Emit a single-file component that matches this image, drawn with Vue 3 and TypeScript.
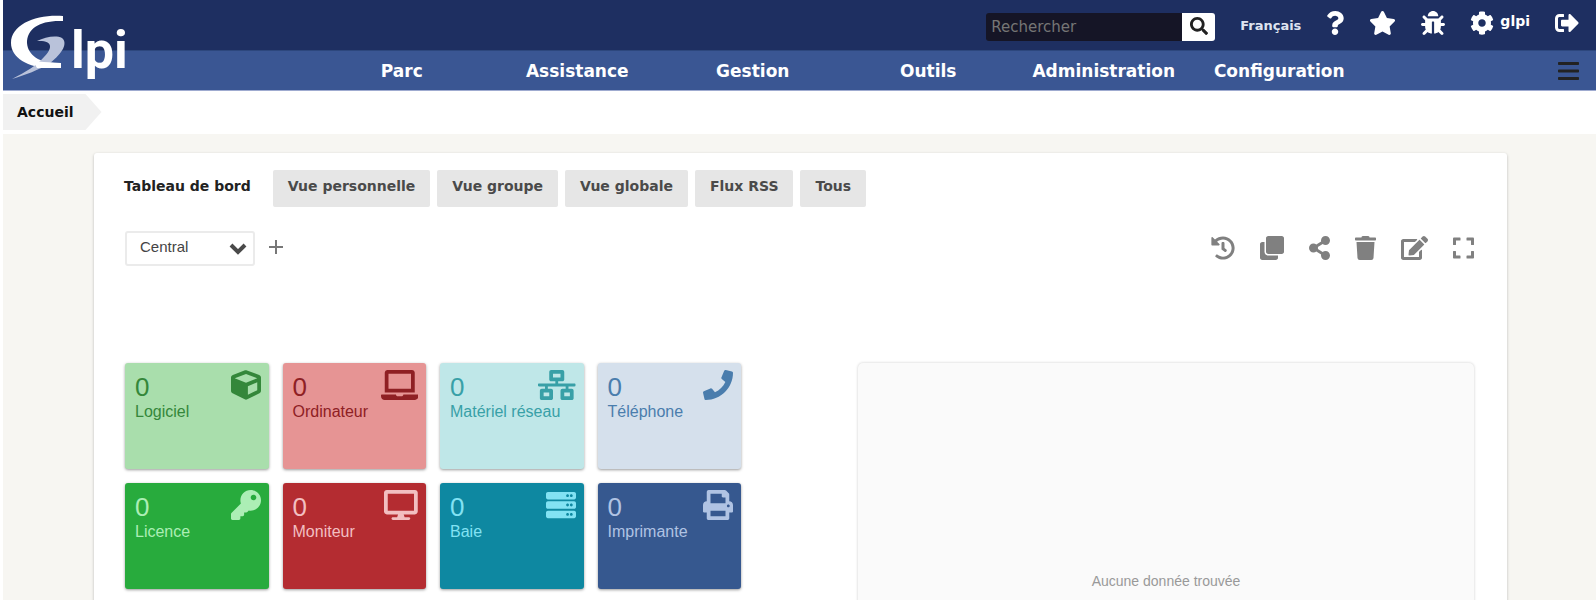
<script setup lang="ts">
import { ref } from 'vue'

interface Icon {
  w: number
  d: string
}

interface Tile {
  label: string
  icon: string
  tone: string
}

const rack = (y: number): string =>
  `M480 ${y + 128}H32c-17.7 0-32-14.3-32-32V${y + 32}C0 ${y + 14.3} 14.3 ${y} 32 ${y}h448c17.7 0 32 14.3 32 32v64c0 17.7-14.3 32-32 32z` +
  `m-48-88c-13.3 0-24 10.7-24 24s10.7 24 24 24 24-10.7 24-24-10.7-24-24-24z` +
  `m-64 0c-13.3 0-24 10.7-24 24s10.7 24 24 24 24-10.7 24-24-10.7-24-24-24z`

const bar = (y: number): string =>
  `M16 ${y + 60}h416c8.8 0 16-7.2 16-16V${y + 16}c0-8.8-7.2-16-16-16H16C7.2 ${y} 0 ${y + 7.2} 0 ${y + 16}v28c0 8.8 7.2 16 16 16z`

const icons: Record<string, Icon> = {
  search: { w: 512, d: 'M505 442.7L405.3 343c-4.5-4.5-10.6-7-17-7H372c27.6-35.3 44-79.7 44-128C416 93.1 322.9 0 208 0S0 93.1 0 208s93.1 208 208 208c48.3 0 92.7-16.4 128-44v16.3c0 6.4 2.5 12.5 7 17l99.7 99.7c9.4 9.4 24.6 9.4 33.9 0l28.3-28.3c9.4-9.4 9.4-24.6.1-34zM208 336c-70.7 0-128-57.2-128-128 0-70.7 57.2-128 128-128 70.7 0 128 57.2 128 128 0 70.7-57.2 128-128 128z' },
  question: { w: 384, d: 'M202.021 0C122.202 0 70.503 32.703 29.914 91.026c-7.363 10.58-5.093 25.086 5.178 32.874l43.138 32.709c10.373 7.865 25.132 6.026 33.253-4.148 25.049-31.381 43.63-49.449 82.757-49.449 30.764 0 68.816 19.799 68.816 49.631 0 22.552-18.617 34.134-48.993 51.164-35.423 19.86-82.299 44.576-82.299 106.405V320c0 13.255 10.745 24 24 24h72.471c13.255 0 24-10.745 24-24v-5.773c0-42.86 125.268-44.645 125.268-160.627C377.504 66.256 286.902 0 202.021 0zM192 373.459c-38.196 0-69.271 31.075-69.271 69.271 0 38.195 31.075 69.27 69.271 69.27s69.271-31.075 69.271-69.271-31.075-69.27-69.271-69.27z' },
  star: { w: 576, d: 'M259.3 17.8L194 150.2 47.9 171.5c-26.2 3.8-36.7 36.1-17.7 54.6l105.7 103-25 145.5c-4.5 26.3 23.2 46 46.4 33.7L288 439.6l130.7 68.7c23.2 12.2 50.9-7.4 46.4-33.7l-25-145.5 105.7-103c19-18.5 8.5-50.8-17.7-54.6L382 150.2 316.7 17.8c-11.7-23.6-45.6-23.9-57.4 0z' },
  bug: { w: 512, d: 'M511.988 288.9c-.478 17.43-15.217 31.1-32.653 31.1H424v16c0 21.864-4.882 42.584-13.6 61.145l60.228 60.228c12.496 12.497 12.496 32.758 0 45.255-12.498 12.497-32.759 12.496-45.256 0l-54.736-54.736C345.886 467.965 314.351 480 280 480V236c0-6.627-5.373-12-12-12h-24c-6.627 0-12 5.373-12 12v244c-34.351 0-65.886-12.035-90.636-32.108l-54.736 54.736c-12.498 12.497-32.759 12.496-45.256 0-12.496-12.497-12.496-32.758 0-45.255l60.228-60.228C92.882 378.584 88 357.864 88 336v-16H32.666C15.23 320 .491 306.33.013 288.9-.484 270.816 14.028 256 32 256h56v-58.745l-46.628-46.628c-12.496-12.497-12.496-32.758 0-45.255 12.498-12.497 32.758-12.497 45.256 0L141.255 160h229.489l54.627-54.627c12.498-12.497 32.758-12.497 45.256 0 12.496 12.497 12.496 32.758 0 45.255L424 197.255V256h56c17.972 0 32.484 14.816 31.988 32.9zM257 0c-61.856 0-112 50.144-112 112h224C369 50.144 318.856 0 257 0z' },
  cog: { w: 512, d: 'M487.4 315.7l-42.6-24.6c4.3-23.2 4.3-47 0-70.2l42.6-24.6c4.9-2.8 7.1-8.6 5.5-14-11.1-35.6-30-67.8-54.7-94.6-3.8-4.1-10-5.1-14.8-2.3L380.8 110c-17.9-15.4-38.5-27.3-60.8-35.1V25.8c0-5.6-3.9-10.5-9.4-11.7-36.7-8.2-74.3-7.8-109.2 0-5.5 1.2-9.4 6.1-9.4 11.7V75c-22.2 7.9-42.8 19.8-60.8 35.1L88.7 85.5c-4.9-2.8-11-1.9-14.8 2.3-24.7 26.7-43.6 58.9-54.7 94.6-1.7 5.4.6 11.2 5.5 14L67.3 221c-4.3 23.2-4.3 47 0 70.2l-42.6 24.6c-4.9 2.8-7.1 8.6-5.5 14 11.1 35.6 30 67.8 54.7 94.6 3.8 4.1 10 5.1 14.8 2.3l42.6-24.6c17.9 15.4 38.5 27.3 60.8 35.1v49.2c0 5.6 3.9 10.5 9.4 11.7 36.7 8.2 74.3 7.8 109.2 0 5.5-1.2 9.4-6.1 9.4-11.7v-49.2c22.2-7.9 42.8-19.8 60.8-35.1l42.6 24.6c4.9 2.8 11 1.9 14.8-2.3 24.7-26.7 43.6-58.9 54.7-94.6 1.5-5.5-.7-11.3-5.6-14.1zM256 336c-44.1 0-80-35.9-80-80s35.9-80 80-80 80 35.9 80 80-35.9 80-80 80z' },
  logout: { w: 512, d: 'M497 273L329 441c-15 15-41 4.5-41-17v-96H152c-13.3 0-24-10.7-24-24v-96c0-13.3 10.7-24 24-24h136V88c0-21.4 25.9-32 41-17l168 168c9.3 9.4 9.3 24.6 0 34zM192 436v-40c0-6.6-5.4-12-12-12H96c-17.7 0-32-14.3-32-32V160c0-17.7 14.3-32 32-32h84c6.6 0 12-5.4 12-12V76c0-6.6-5.4-12-12-12H96c-53 0-96 43-96 96v192c0 53 43 96 96 96h84c6.6 0 12-5.4 12-12z' },
  bars: { w: 448, d: bar(66) + bar(226) + bar(386) },
  history: { w: 512, d: 'M504 255.531c.253 136.64-111.18 248.372-247.82 248.468-59.015.042-113.223-20.53-155.822-54.911-11.077-8.94-11.905-25.541-1.839-35.607l11.267-11.267c8.609-8.609 22.353-9.551 31.891-1.984C173.062 425.135 212.781 440 256 440c101.705 0 184-82.311 184-184 0-101.705-82.311-184-184-184-48.814 0-93.149 18.969-126.068 49.932l50.754 50.754c10.08 10.08 2.941 27.314-11.313 27.314H24c-8.837 0-16-7.163-16-16V38.627c0-14.254 17.234-21.393 27.314-11.314l49.372 49.372C129.209 34.136 189.552 8 256 8c136.81 0 247.747 110.78 248 247.531zm-180.912 78.784l9.823-12.63c8.138-10.463 6.253-25.542-4.21-33.679L288 256.349V152c0-13.255-10.745-24-24-24h-16c-13.255 0-24 10.745-24 24v135.651l65.409 50.874c10.463 8.137 25.541 6.253 33.679-4.21z' },
  clone: { w: 512, d: 'M464 0c26.51 0 48 21.49 48 48v288c0 26.51-21.49 48-48 48H176c-26.51 0-48-21.49-48-48V48c0-26.51 21.49-48 48-48h288M176 416c-44.112 0-80-35.888-80-80V128H48c-26.51 0-48 21.49-48 48v288c0 26.51 21.49 48 48 48h288c26.51 0 48-21.49 48-48v-48H176z' },
  share: { w: 448, d: 'M352 320c-22.608 0-43.387 7.819-59.79 20.895l-102.486-64.054a96.551 96.551 0 0 0 0-41.683l102.486-64.054C308.613 184.181 329.392 192 352 192c53.019 0 96-42.981 96-96S405.019 0 352 0s-96 42.981-96 96c0 7.158.79 14.13 2.276 20.841L155.79 180.895C139.387 167.819 118.608 160 96 160c-53.019 0-96 42.981-96 96s42.981 96 96 96c22.608 0 43.387-7.819 59.79-20.895l102.486 64.054A96.301 96.301 0 0 0 256 416c0 53.019 42.981 96 96 96s96-42.981 96-96-42.981-96-96-96z' },
  trash: { w: 448, d: 'M432 32H312l-9.4-18.7A24 24 0 0 0 281.1 0H166.8a23.72 23.72 0 0 0-21.4 13.3L136 32H16A16 16 0 0 0 0 48v32a16 16 0 0 0 16 16h416a16 16 0 0 0 16-16V48a16 16 0 0 0-16-16zM53.2 467a48 48 0 0 0 47.9 45h245.8a48 48 0 0 0 47.9-45L416 128H32z' },
  edit: { w: 576, d: 'M402.6 83.2l90.2 90.2c3.8 3.8 3.8 10 0 13.8L274.4 405.6l-92.8 10.3c-12.4 1.4-22.9-9.1-21.5-21.5l10.3-92.8L388.8 83.2c3.8-3.8 10-3.8 13.8 0zm162-22.9l-48.8-48.8c-15.2-15.2-39.9-15.2-55.2 0l-35.4 35.4c-3.8 3.8-3.8 10 0 13.8l90.2 90.2c3.8 3.8 10 3.8 13.8 0l35.4-35.4c15.2-15.3 15.2-40 0-55.2zM384 346.2V448H64V128h229.8c3.2 0 6.2-1.3 8.5-3.5l40-40c7.6-7.6 2.2-20.5-8.5-20.5H48C21.5 64 0 85.5 0 112v352c0 26.5 21.5 48 48 48h352c26.5 0 48-21.5 48-48V306.2c0-10.7-12.9-16-20.5-8.5l-40 40c-2.2 2.3-3.5 5.3-3.5 8.5z' },
  expand: { w: 448, d: 'M0 180V56c0-13.3 10.7-24 24-24h124c6.6 0 12 5.4 12 12v40c0 6.6-5.4 12-12 12H64v84c0 6.6-5.4 12-12 12H12c-6.6 0-12-5.4-12-12zM288 44v40c0 6.6 5.4 12 12 12h84v84c0 6.6 5.4 12 12 12h40c6.6 0 12-5.4 12-12V56c0-13.3-10.7-24-24-24H300c-6.6 0-12 5.4-12 12zm148 276h-40c-6.6 0-12 5.4-12 12v84h-84c-6.6 0-12 5.4-12 12v40c0 6.6 5.4 12 12 12h124c13.3 0 24-10.7 24-24V332c0-6.6-5.4-12-12-12zM160 468v-40c0-6.6-5.4-12-12-12H64v-84c0-6.6-5.4-12-12-12H12c-6.6 0-12 5.4-12 12v124c0 13.3 10.7 24 24 24h124c6.6 0 12-5.4 12-12z' },
  cube: { w: 512, d: 'M239.1 6.3l-208 78c-18.7 7-31.1 25-31.1 45v225.1c0 18.2 10.3 34.8 26.5 42.9l208 104c13.5 6.8 29.4 6.8 42.9 0l208-104c16.3-8.1 26.5-24.8 26.5-42.9V129.3c0-20-12.4-37.9-31.1-44.9l-208-78C262 2.2 250 2.2 239.1 6.3zM256 68.4l192 72v1.1l-192 78-192-78v-1.1l192-72zm32 356V275.5l160-65v133.9l-160 80z' },
  laptop: { w: 640, d: 'M624 416H381.54c-.74 19.81-14.71 32-32.74 32H288c-18.69 0-33.02-17.47-32.77-32H16c-8.8 0-16 7.2-16 16v16c0 35.2 28.8 64 64 64h512c35.2 0 64-28.8 64-64v-16c0-8.8-7.2-16-16-16zM576 48c0-26.4-21.6-48-48-48H112C85.6 0 64 21.6 64 48v336h512V48zm-64 272H128V64h384v256z' },
  network: { w: 640, d: 'M640 264v-16c0-8.84-7.16-16-16-16H344v-40h72c17.67 0 32-14.33 32-32V32c0-17.67-14.33-32-32-32H224c-17.67 0-32 14.33-32 32v128c0 17.67 14.33 32 32 32h72v40H16c-8.84 0-16 7.16-16 16v16c0 8.84 7.16 16 16 16h104v40H64c-17.67 0-32 14.33-32 32v128c0 17.67 14.33 32 32 32h160c17.67 0 32-14.33 32-32V352c0-17.67-14.33-32-32-32h-56v-40h304v40h-56c-17.67 0-32 14.33-32 32v128c0 17.67 14.33 32 32 32h160c17.67 0 32-14.33 32-32V352c0-17.67-14.33-32-32-32h-56v-40h104c8.84 0 16-7.16 16-16zM256 128V64h128v64H256zm-64 320H96v-64h96v64zm352 0h-96v-64h96v64z' },
  phone: { w: 512, d: 'M493.4 24.6l-104-24c-11.3-2.6-22.9 3.3-27.5 13.9l-48 112c-4.2 9.8-1.4 21.3 6.9 28l60.6 49.6c-36 76.7-98.9 140.5-177.2 177.2l-49.6-60.6c-6.8-8.3-18.2-11.1-28-6.9l-112 48C3.9 366.5-2 378.1.6 389.4l24 104C27.1 504.2 36.7 512 48 512c256.1 0 464-207.5 464-464 0-11.2-7.7-20.9-18.6-23.4z' },
  key: { w: 512, d: 'M512 176.001C512 273.203 433.202 352 336 352c-11.22 0-22.19-1.062-32.827-3.069l-24.012 27.014A23.999 23.999 0 0 1 261.223 384H224v40c0 13.255-10.745 24-24 24h-40v40c0 13.255-10.745 24-24 24H24c-13.255 0-24-10.745-24-24v-78.059c0-6.365 2.529-12.47 7.029-16.971l161.802-161.802C163.108 213.814 160 195.271 160 176 160 78.798 238.797.001 335.999 0 433.488-.001 512 78.511 512 176.001zM336 128c0 26.51 21.49 48 48 48s48-21.49 48-48-21.49-48-48-48-48 21.49-48 48z' },
  desktop: { w: 576, d: 'M528 0H48C21.5 0 0 21.5 0 48v320c0 26.5 21.5 48 48 48h192l-16 48h-72c-13.3 0-24 10.7-24 24s10.7 24 24 24h272c13.3 0 24-10.7 24-24s-10.7-24-24-24h-72l-16-48h192c26.5 0 48-21.5 48-48V48c0-26.5-21.5-48-48-48zm-16 352H64V64h448v288z' },
  server: { w: 512, d: rack(32) + rack(192) + rack(352) },
  print: { w: 512, d: 'M448 192V77.25c0-8.49-3.37-16.62-9.37-22.63L393.37 9.37c-6-6-14.14-9.37-22.63-9.37H96C78.33 0 64 14.33 64 32v160c-35.35 0-64 28.65-64 64v112c0 8.84 7.16 16 16 16h48v96c0 17.67 14.33 32 32 32h320c17.67 0 32-14.33 32-32v-96h48c8.84 0 16-7.16 16-16V256c0-35.35-28.65-64-64-64zm-64 256H128v-96h256v96zm0-224H128V64h192v48c0 8.84 7.16 16 16 16h48v96zm48 72c-13.25 0-24-10.75-24-24 0-13.26 10.75-24 24-24s24 10.74 24 24c0 13.25-10.75 24-24 24z' },
}

const box = (name: string): string => `0 0 ${icons[name].w} 512`

const menu = ['Parc', 'Assistance', 'Gestion', 'Outils', 'Administration', 'Configuration']
const tabs = ['Tableau de bord', 'Vue personnelle', 'Vue groupe', 'Vue globale', 'Flux RSS', 'Tous']
const activeTab = ref(0)
const search = ref('')
const dashboard = ref('Central')

const shortcuts = [
  { icon: 'question', label: 'Aide' },
  { icon: 'star', label: 'Marque-pages' },
  { icon: 'bug', label: 'Mode debug' },
]

const tools = [
  { icon: 'history', label: 'Historique' },
  { icon: 'clone', label: 'Cloner' },
  { icon: 'share', label: 'Partager' },
  { icon: 'trash', label: 'Supprimer' },
  { icon: 'edit', label: 'Modifier' },
  { icon: 'expand', label: 'Plein écran' },
]

const tiles: Tile[] = [
  { label: 'Logiciel', icon: 'cube', tone: 'software' },
  { label: 'Ordinateur', icon: 'laptop', tone: 'computer' },
  { label: 'Matériel réseau', icon: 'network', tone: 'network' },
  { label: 'Téléphone', icon: 'phone', tone: 'phone' },
  { label: 'Licence', icon: 'key', tone: 'licence' },
  { label: 'Moniteur', icon: 'desktop', tone: 'monitor' },
  { label: 'Baie', icon: 'server', tone: 'rack' },
  { label: 'Imprimante', icon: 'print', tone: 'printer' },
]
</script>

<template>
  <div class="page">
    <header class="header">
      <a class="logo" href="#" aria-label="Glpi">
        <svg viewBox="0 0 130 90" width="130" height="90">
          <path fill="#fff" d="M60 16C34 14 8 24 8 43C8 58 26 69 52 68H58V63C38 64 25 56 24 43C24 29 36 20 60 21Z" />
          <path fill="#b9c2da" d="M34 41C42 37 53 35 59 38C65 43 60 53 47 63C36 70 22 75 9 79C23 72 34 65 41 57C50 48 50 40 34 41Z" />
          <path fill="#fff" d="M30 61L41 62L58 63V68L34 68Z" />
          <text x="68" y="68" class="logo-text">lpi</text>
        </svg>
      </a>
      <div class="topbar">
        <form class="search" @submit.prevent>
          <input v-model="search" type="text" placeholder="Rechercher" aria-label="Rechercher" />
          <button type="submit" aria-label="Lancer la recherche">
            <svg class="i18" :viewBox="box('search')"><path :d="icons.search.d" /></svg>
          </button>
        </form>
        <a href="#" class="lang">Français</a>
        <a v-for="s in shortcuts" :key="s.icon" href="#" :aria-label="s.label">
          <svg class="i24" :viewBox="box(s.icon)"><path :d="icons[s.icon].d" /></svg>
        </a>
        <a href="#" class="user">
          <svg class="i24" :viewBox="box('cog')"><path :d="icons.cog.d" /></svg>
          <span>glpi</span>
        </a>
        <a href="#" aria-label="Déconnexion">
          <svg class="i24" :viewBox="box('logout')"><path :d="icons.logout.d" /></svg>
        </a>
      </div>
      <nav class="nav">
        <ul>
          <li v-for="m in menu" :key="m"><a href="#">{{ m }}</a></li>
        </ul>
        <button type="button" class="burger" aria-label="Menu">
          <svg class="i24" :viewBox="box('bars')"><path :d="icons.bars.d" /></svg>
        </button>
      </nav>
    </header>

    <div class="crumbs"><a href="#">Accueil</a></div>

    <main class="main">
      <section class="card">
        <div class="tabs" role="tablist">
          <button
            v-for="(t, i) in tabs"
            :key="t"
            type="button"
            role="tab"
            :aria-selected="i === activeTab"
            :class="{ active: i === activeTab }"
            @click="activeTab = i"
          >{{ t }}</button>
        </div>

        <div class="toolbar">
          <div class="picker">
            <select v-model="dashboard" aria-label="Tableau de bord">
              <option>Central</option>
            </select>
            <svg viewBox="0 0 18 12" width="18" height="12"><path d="M2 2L9 9L16 2" /></svg>
          </div>
          <button type="button" class="add" aria-label="Ajouter">
            <svg viewBox="0 0 14 14" width="14" height="14"><path d="M7 0V14M0 7H14" /></svg>
          </button>
          <div class="tools">
            <button v-for="t in tools" :key="t.icon" type="button" :aria-label="t.label">
              <svg class="i24" :viewBox="box(t.icon)"><path :d="icons[t.icon].d" /></svg>
            </button>
          </div>
        </div>

        <div class="dashboard">
          <div class="tiles">
            <a v-for="t in tiles" :key="t.label" href="#" class="tile" :class="t.tone">
              <span class="figures">
                <span class="count">0</span>
                <span class="name">{{ t.label }}</span>
              </span>
              <svg class="i30" :viewBox="box(t.icon)"><path :d="icons[t.icon].d" /></svg>
            </a>
          </div>
          <div class="empty">Aucune donnée trouvée</div>
        </div>
      </section>
    </main>
  </div>
</template>

<style>
body {
  margin: 0;
  background: #fff;
}
</style>

<style scoped>
.page {
  box-sizing: border-box;
  height: 100vh;
  overflow-y: auto;
  scrollbar-width: none;
  padding-left: 3px;
  font-family: "DejaVu Sans", Verdana, sans-serif;
  font-size: 14px;
  color: #333;
}

a {
  color: inherit;
  text-decoration: none;
}

button {
  display: flex;
  align-items: center;
  padding: 0;
  border: 0;
  background: none;
  color: inherit;
  font: inherit;
  cursor: pointer;
}

svg {
  display: block;
  fill: currentColor;
}

.i18 { height: 18px; }
.i24 { height: 24px; }
.i30 { height: 30px; flex: none; }

.header {
  position: relative;
  color: #fff;
}

.logo {
  position: absolute;
  left: 0;
  top: 0;
}

.logo-text {
  fill: #fff;
  font: 700 52px Roboto, sans-serif;
}

.topbar {
  display: flex;
  justify-content: flex-end;
  align-items: center;
  gap: 25px;
  box-sizing: border-box;
  height: 50px;
  padding: 0 17px 5px 140px;
  background: #1e2f61;
}

.search {
  display: flex;
  height: 28px;
  margin-top: 8px;
  border-radius: 3px;
  overflow: hidden;
}

.search input {
  box-sizing: border-box;
  width: 196px;
  padding: 0 5px;
  border: 0;
  background: #151526;
  color: #ddd;
  font: 15px "DejaVu Sans", Verdana, sans-serif;
  outline: 0;
}

.search input::placeholder {
  color: #757575;
  opacity: 1;
}

.search button {
  justify-content: center;
  width: 33px;
  padding-bottom: 2px;
  background: #fff;
  color: #222;
}

.lang {
  padding-top: 6px;
  color: #dfe4f0;
  font-size: 13px;
  font-weight: 700;
}

.user {
  display: flex;
  align-items: center;
  gap: 6px;
  font-weight: 700;
}

.user span {
  padding-bottom: 4px;
}

.nav {
  display: flex;
  align-items: center;
  box-sizing: border-box;
  height: 41px;
  padding: 0 17px 0 311px;
  border-top: 1px solid #2d477d;
  border-bottom: 1px solid #9fabd0;
  background: #3a5693;
}

.nav ul {
  display: grid;
  grid-template-columns: repeat(6, minmax(0, 1fr));
  flex: 1;
  margin: 0;
  padding: 0;
  list-style: none;
}

.nav li {
  text-align: center;
  font-size: 17px;
  line-height: 20px;
  font-weight: 700;
}

.burger {
  justify-content: flex-end;
  width: 212px;
  color: #222;
}

.crumbs {
  display: flex;
  padding: 3px 0 4px;
}

.crumbs a {
  padding: 0 28px 0 14px;
  background: #f1f1f1;
  clip-path: polygon(0 0, calc(100% - 16px) 0, 100% 50%, calc(100% - 16px) 100%, 0 100%);
  color: #111;
  font-weight: 700;
  line-height: 36px;
}

.main {
  padding: 19px 89px 19px 91px;
  background: #f7f6f2;
}

.card {
  padding: 17px 17px 32px 15px;
  border-radius: 3px;
  background: #fff;
  box-shadow: 0 1px 3px rgba(0, 0, 0, 0.25);
}

.tabs {
  display: flex;
  gap: 7px;
}

.tabs button {
  height: 37px;
  padding: 0 15px 5px;
  border-radius: 2px;
  background: #e6e6e6;
  color: #4a4a4a;
  font-weight: 700;
}

.tabs .active {
  background: #fff;
  color: #222;
}

.toolbar {
  display: flex;
  align-items: center;
  margin: 24px 16px 0;
}

.picker {
  position: relative;
  width: 130px;
}

.picker select {
  display: block;
  appearance: none;
  box-sizing: border-box;
  width: 100%;
  height: 35px;
  padding: 0 32px 4px 13px;
  border: 2px solid #ebebeb;
  border-radius: 3px;
  background: #fff;
  color: #444;
  font: 15px "Liberation Sans", Arial, sans-serif;
}

.picker svg {
  position: absolute;
  right: 8px;
  top: 12px;
  fill: none;
  stroke: #4a4a4a;
  stroke-width: 4;
  pointer-events: none;
}

.add {
  margin: 0 0 4px 14px;
}

.add svg {
  stroke: #777;
  stroke-width: 2;
}

.tools {
  display: flex;
  gap: 25px;
  margin-left: auto;
  padding-bottom: 2px;
  color: #808080;
}

.dashboard {
  display: grid;
  grid-template-columns: repeat(2, minmax(0, 1fr));
  align-items: start;
  gap: 117px;
  margin: 97px 16px 0;
  font-family: "Liberation Sans", Arial, sans-serif;
}

.tiles {
  display: grid;
  grid-template-columns: repeat(4, minmax(0, 1fr));
  gap: 14px;
}

.tile {
  display: flex;
  justify-content: space-between;
  align-items: flex-start;
  box-sizing: border-box;
  height: 106px;
  padding: 7px 8px 7px 10px;
  border-radius: 3px;
  box-shadow: 0 1px 3px rgba(0, 0, 0, 0.4);
}

.figures {
  display: flex;
  flex-direction: column;
  width: 0;
  padding-top: 2px;
  white-space: nowrap;
}

.count {
  font-size: 26px;
  line-height: 30px;
}

.name {
  font-size: 16px;
  line-height: 20px;
}

.software { background: #a9deac; color: #34873a; }
.computer { background: #e69494; color: #8f2024; }
.network { background: #bfe7e8; color: #38a0a7; }
.phone { background: #d5e0ec; color: #4a7dad; }
.licence { background: #28ab3d; color: #aceeb5; }
.monitor { background: #b42c31; color: #f2bfc1; }
.rack { background: #0e88a1; color: #82e2f3; }
.printer { background: #36588f; color: #b0c3e3; }

.empty {
  display: flex;
  align-items: center;
  justify-content: center;
  height: 436px;
  border-radius: 5px;
  background: #fafafa;
  box-shadow: 0 0 3px rgba(0, 0, 0, 0.2);
  color: #999;
  font-size: 14px;
}
</style>
